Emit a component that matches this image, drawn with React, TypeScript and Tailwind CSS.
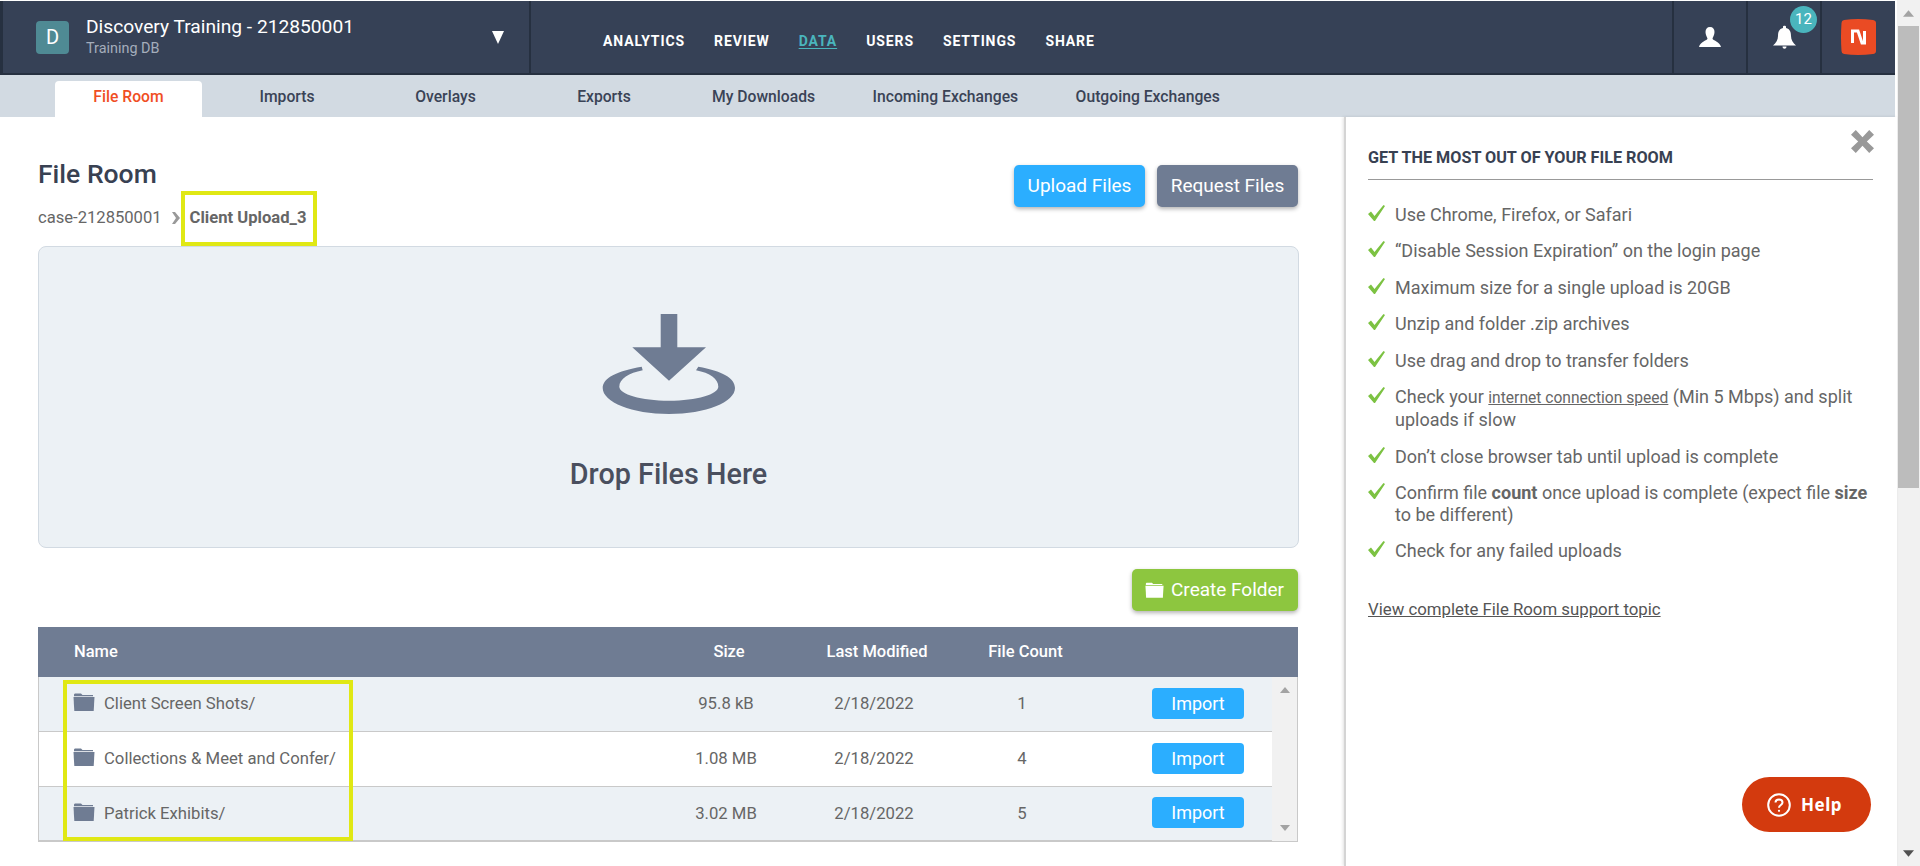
const tabs = ["File Room", "Imports", "Overlays", "Exports", "My Downloads", "Incoming Exchanges", "Outgoing Exchanges"];
const nav = ["ANALYTICS", "REVIEW", "DATA", "USERS", "SETTINGS", "SHARE"];
const rows = [
  { name: "Client Screen Shots/", size: "95.8 kB", date: "2/18/2022", count: 1 },
  { name: "Collections & Meet and Confer/", size: "1.08 MB", date: "2/18/2022", count: 4 },
  { name: "Patrick Exhibits/", size: "3.02 MB", date: "2/18/2022", count: 5 },
];

function Folder({ className }: { className: string }) {
  return (
    <svg viewBox="0 0 22 18" className={className} fill="currentColor">
      <path d="M1 2C1 1 1.500 .500 2.500 .500H8L9.500 2H20V3.200H1Z" />
      <path d="M.500 4H21.500L20.700 18H1.300Z" />
    </svg>
  );
}

function Check() {
  return (
    <svg viewBox="0 0 17 16" className="w-[17px] h-[16px] mt-[1px] shrink-0" fill="#7cc242">
      <path d="M0 9L3 6.500L6.500 11L15.500 0L17 1L7 16H6Z" />
    </svg>
  );
}

function Tip({ children }: { children: React.ReactNode }) {
  return (
    <li className="flex gap-[10px]">
      <Check />
      <div>{children}</div>
    </li>
  );
}

export default function App() {
  return (
    <div className="flex h-[866px] w-[1920px] overflow-hidden bg-white [font-family:Roboto,sans-serif]">
      <div className="flex flex-col w-[1897px]">
        <header className="flex h-[74px] w-[1895px] mt-[1px] bg-[#364156] border-b-2 border-[#263040] border-l-[3px] text-white shrink-0">
          <div className="flex items-center w-[528px] border-r-2 border-[#263040] pl-[33px] pr-[25px]">
            <div className="w-[33px] h-[33px] rounded-[4px] bg-[#4f8a94] flex items-center justify-center text-[20px] mr-[17px]">D</div>
            <div className="flex-1">
              <div className="text-[19.200px] leading-[24px] -mt-[1px]">Discovery Training - 212850001</div>
              <div className="text-[14.400px] leading-[18px] mt-[1px] text-[#a4adbb]">Training DB</div>
            </div>
            <svg viewBox="0 0 12 13" className="w-[12px] h-[13px]" fill="white"><path d="M0 0H12L6 13Z" /></svg>
          </div>
          <nav className="flex-1 flex items-center gap-[29px] pl-[72px] pt-[8px] text-[14px] font-bold tracking-[0.9px]">
            {nav.map((n) => (
              <span key={n} className={n === "DATA" ? "text-[#4ab5bd] underline underline-offset-2" : ""}>{n}</span>
            ))}
          </nav>
          <div className="flex items-center justify-center w-[74px] border-l-2 border-[#263040]">
            <svg viewBox="0 0 22 20" className="w-[22px] h-[20px]" fill="white">
              <path d="M11 0C14 0 15.500 2 15.500 5C15.500 8 14 10 13.500 11.500C13.500 13.500 21 14.500 22 20H0C1 14.500 8.500 13.500 8.500 11.500C8 10 6.500 8 6.500 5C6.500 2 8 0 11 0Z" />
            </svg>
          </div>
          <div className="relative flex items-center justify-center w-[74px] border-l-2 border-[#263040]">
            <svg viewBox="0 0 23 24" className="w-[23px] h-[24px]" fill="white">
              <path d="M10 1.500C10 .500 13 .500 13 1.500V3C17 4 18 7 18 11C18 15 20 18 23 20.500H0C3 18 5 15 5 11C5 7 6 4 10 3ZM9.500 21.500H13.500C13.500 24.500 9.500 24.500 9.500 21.500Z" />
            </svg>
            <span className="absolute top-[5px] left-[42px] w-[27px] h-[27px] rounded-full bg-[#4ab5bd] flex items-center justify-center text-[15px]">12</span>
          </div>
          <div className="flex items-center justify-center w-[75px] border-l-2 border-[#263040]">
            <svg viewBox="0 0 35 36" className="w-[35px] h-[36px]">
              <path d="M3 1Q17 -1 32 1Q35 1.500 35 4Q36 18 35 32Q35 34.500 32 35Q17 37 3 35Q.5 34.500 .5 32Q-.5 18 .5 4Q.5 1.500 3 1Z" fill="#ea4b24" />
              <path d="M11.500 12V24M10 12H17L21 24H25M23.500 24V12" fill="none" stroke="white" strokeWidth="3" />
            </svg>
          </div>
        </header>

        <div className="flex items-end h-[42px] w-[1895px] bg-[#d2dae2] pl-[55px] gap-[11.500px] shrink-0">
          {tabs.map((t, i) => (
            <div
              key={t}
              className={
                "h-[36px] min-w-[147px] px-[23px] pb-[4px] flex items-center justify-center text-[15.700px] font-medium rounded-t-[4px] " +
                (i === 0 ? "bg-white text-[#f04e23]" : "text-[#3a4356]")
              }
            >
              {t}
            </div>
          ))}
        </div>

        <div className="flex flex-1 min-h-0">
          <main className="w-[1344px] pl-[38px] pr-[46px] pt-[42px] shrink-0">
            <div className="flex justify-between items-start">
              <div>
                <h1 className="text-[26.500px] leading-[30px] font-medium text-[#384152]">File Room</h1>
                <div className="flex items-center mt-[18px] text-[16.600px] leading-[22px] text-[#666]">
                  <span>case-212850001</span>
                  <svg viewBox="0 0 8 12" className="w-[8px] h-[12px] mx-[10px]" fill="#999"><path d="M0 0H3L8 6L3 12H0L4 6Z" /></svg>
                  <span className="relative font-bold">
                    Client Upload_3
                    <span className="absolute -left-[9px] -right-[11px] -top-[16px] -bottom-[17px] border-[4px] border-[#e0e814]" />
                  </span>
                </div>
              </div>
              <div className="flex gap-[12px] mt-[6px] text-[19px] text-white">
                <button className="w-[131px] h-[42px] rounded-[5px] bg-[#2baeff] shadow-[0_2px_4px_rgba(0,0,0,0.3)]">Upload Files</button>
                <button className="w-[141px] h-[42px] rounded-[5px] bg-[#6f7c93] shadow-[0_2px_4px_rgba(0,0,0,0.3)]">Request Files</button>
              </div>
            </div>

            <div className="mt-[17px] -mr-[1px] h-[302px] rounded-[8px] bg-[#ecf1f5] border border-[#d2dae2] flex flex-col items-center pt-[65px]">
              <svg viewBox="0 0 134 104" className="w-[134px] h-[104px]" fill="#6f7c93">
                <path d="M58.700 2H75.300V35.300H104L67 68.700L30.300 35.300H58.700Z" />
                <path d="M39.700 54.700C15 59 .7 66 .7 76C.7 90 30 102 67 102C104 102 133 90 133 76C133 66 120 59 96.300 54.700L94 58.300C108 61 116.300 67 116.300 74.700C116.300 82 95 88.700 67 88.700C39 88.700 17.300 82 17.300 74.700C17.300 67 27 61 40.700 58.300Z" />
              </svg>
              <div className="mt-[42px] text-[28.800px] leading-[32px] font-medium text-[#4a4f5e]">Drop Files Here</div>
            </div>

            <div className="flex justify-end mt-[21px]">
              <button className="w-[166px] h-[42px] rounded-[5px] bg-[#8dc63f] shadow-[0_2px_4px_rgba(0,0,0,0.3)] flex items-center pl-[13px] gap-[7px] text-[19px] text-white">
                <Folder className="w-[19px] h-[16px]" />
                Create Folder
              </button>
            </div>

            <div className="relative mt-[16px] text-[16.700px]">
              <div className="grid grid-cols-[621px_140px_156px_141px_202px] h-[50px] items-center bg-[#6f7c93] text-white font-medium text-[16.500px]">
                <div className="pl-[36px]">Name</div>
                <div className="text-center">Size</div>
                <div className="text-center">Last Modified</div>
                <div className="text-center">File Count</div>
                <div />
              </div>
              <div className="flex">
                <div className="w-[1234px] border-l border-[#c9c9c9]">
                  {rows.map((r, i) => (
                    <div
                      key={r.name}
                      className={
                        "grid grid-cols-[617px_140px_156px_140px_180px] h-[55px] items-center text-[#666] " +
                        (i === 2 ? "border-b-2 border-[#c9c9c9] " : "border-b border-[#c9c9c9] ") +
                        (i === 1 ? "bg-white" : "bg-[#ecf1f5]")
                      }
                    >
                      <div className="flex items-center gap-[9px] pl-[34px]">
                        <Folder className="w-[22px] h-[18px] text-[#6f7c93] -mt-[3px]" />
                        {r.name}
                      </div>
                      <div className="text-center">{r.size}</div>
                      <div className="text-center">{r.date}</div>
                      <div className="text-center">{r.count}</div>
                      <div className="flex pl-[60px] pb-[2px]">
                        <button className="w-[92px] h-[31px] rounded-[4px] bg-[#2baeff] text-white text-[18px]">Import</button>
                      </div>
                    </div>
                  ))}
                </div>
                <div className="flex-1 flex flex-col items-center justify-between bg-[#f1f1f1] border-r border-b border-[#c9c9c9] py-[10px]">
                  <svg viewBox="0 0 10 6" className="w-[10px] h-[6px]" fill="#a3a3a3"><path d="M5 0L10 6H0Z" /></svg>
                  <svg viewBox="0 0 10 6" className="w-[10px] h-[6px]" fill="#a3a3a3"><path d="M0 0H10L5 6Z" /></svg>
                </div>
              </div>
              <div className="absolute left-[25px] top-[53px] w-[290px] h-[161px] border-[4px] border-[#e0e814]" />
            </div>
          </main>

          <aside className="relative flex-1 border-l-2 border-[#d4d4d4] shadow-[-1px_0_3px_rgba(0,0,0,0.12)] pl-[22px] pr-[24px] pt-[31px] text-[18px] leading-[21.400px] text-[#666]">
            <svg viewBox="0 0 24 24" className="absolute top-[13px] right-[23px] w-[23px] h-[23px]" fill="#999">
              <path d="M5 0L12 7.500L19 0L24 5L16.500 12L24 19L19 24L12 16.500L5 24L0 19L7.500 12L0 5Z" />
            </svg>
            <h2 className="text-[16.200px] leading-[20px] font-bold text-[#384152] pb-[11px] border-b border-[#999]">GET THE MOST OUT OF YOUR FILE ROOM</h2>
            <ul className="mt-[24px] flex flex-col gap-[15px]">
              <Tip>Use Chrome, Firefox, or Safari</Tip>
              <Tip>“Disable Session Expiration” on the login page</Tip>
              <Tip>Maximum size for a single upload is 20GB</Tip>
              <Tip>Unzip and folder .zip archives</Tip>
              <Tip>Use drag and drop to transfer folders</Tip>
              <Tip>Check your <u className="text-[15.600px]">internet connection speed</u> (Min 5 Mbps) and split uploads if slow</Tip>
              <Tip>Don’t close browser tab until upload is complete</Tip>
              <Tip>Confirm file <b>count</b> once upload is complete (expect file <b>size</b> to be different)</Tip>
              <Tip>Check for any failed uploads</Tip>
            </ul>
            <div className="mt-[38px] underline text-[#555] text-[16.800px]">View complete File Room support topic</div>
            <div className="absolute top-[660px] right-[26px] w-[129px] h-[55px] rounded-full bg-[#d33a0e] flex items-center pl-[25px] gap-[10px] text-white">
              <svg viewBox="0 0 24 24" className="w-[24px] h-[24px]" fill="none" stroke="white" strokeWidth="2">
                <circle cx="12" cy="12" r="10.800" />
                <path d="M8.500 9.500C8.500 7.500 10 6.500 12 6.500C14 6.500 15.500 7.800 15.500 9.500C15.500 12 12 12 12 14.800" />
                <circle cx="12" cy="17.800" r="1.100" fill="white" stroke="none" />
              </svg>
              <span className="[font-family:'Noto_Sans',sans-serif] text-[17px] font-bold tracking-[0.5px]">Help</span>
            </div>
          </aside>
        </div>
      </div>

      <div className="flex-1 bg-[#f1f1f1] flex flex-col items-center">
        <div className="h-[26px] flex items-center">
          <svg viewBox="0 0 10 6" className="w-[11px] h-[7px]" fill="#a3a3a3"><path d="M5 0L10 6H0Z" /></svg>
        </div>
        <div className="w-[21px] h-[462px] bg-[#bcbcbc]" />
        <div className="flex-1" />
        <svg viewBox="0 0 10 6" className="w-[11px] h-[7px] mb-[9px]" fill="#505050"><path d="M0 0H10L5 6Z" /></svg>
      </div>
    </div>
  );
}
